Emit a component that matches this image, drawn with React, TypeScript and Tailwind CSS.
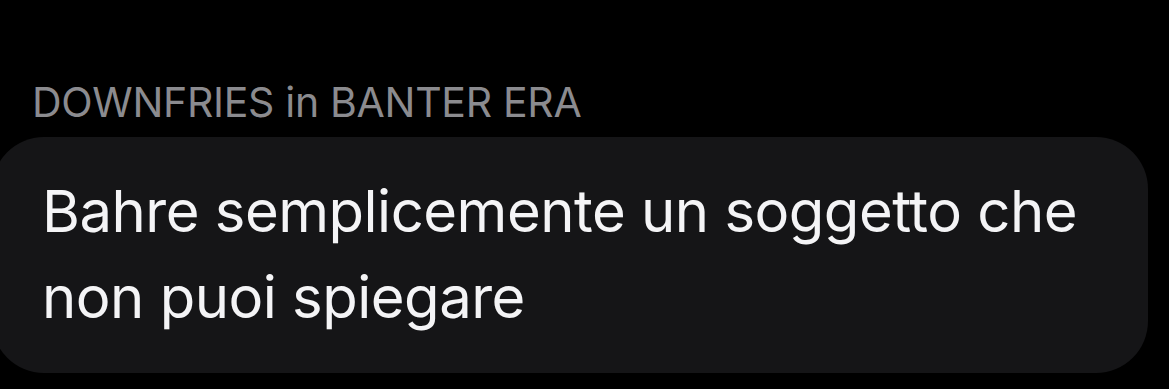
const App = () => {
	return (
		<div className="w-[1169px] h-[389px] bg-black overflow-hidden pt-[78px] font-['Inter','Liberation_Sans',sans-serif]">
			<div className="pl-[32px] text-[41px] leading-[48px] text-[#8b8b8f] tracking-[-0.3px] whitespace-nowrap">
				DOWNFRIES in BANTER ERA
			</div>
			<div className="mt-[11px] ml-[-8px] w-[1156px] h-[236px] rounded-[52px] bg-[#151517] pl-[50px] pt-[31px]">
				<p className="text-[58px] leading-[86px] text-[#f4f4f6] tracking-[-0.5px] whitespace-nowrap">
					Bahre semplicemente un soggetto che
					<br />
					non puoi spiegare
				</p>
			</div>
		</div>
	);
};

export default App;
